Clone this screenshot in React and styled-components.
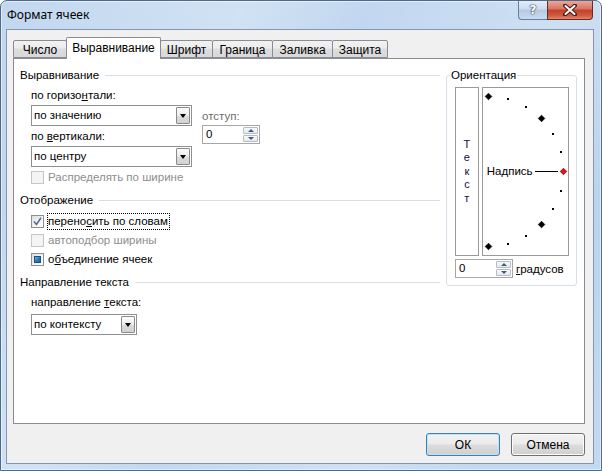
import React from "react";
import styled, { createGlobalStyle } from "styled-components";

const Global = createGlobalStyle`
  html, body { margin: 0; padding: 0; background: #fff; }
  body {
    font-family: "Liberation Sans", Arial, sans-serif;
    font-size: 11.5px;
    color: #000;
  }
  * { box-sizing: border-box; }
`;

const Window = styled.div`
  width: 602px;
  height: 471px;
  display: flex;
  flex-direction: column;
  border: 1px solid #4d6a8a;
  border-radius: 7px 7px 0 0;
  overflow: hidden;
  background:
    linear-gradient(115deg, rgba(255,255,255,0) 0%, rgba(255,255,255,.25) 30%, rgba(255,255,255,0) 45%, rgba(255,255,255,.2) 70%, rgba(255,255,255,0) 85%),
    linear-gradient(180deg, #c2d8f0 0%, #bbd3ed 40%, #c3d9f1 100%);
  box-shadow: inset 0 0 0 1px rgba(255,255,255,.55);
`;

const TitleBar = styled.div`
  height: 28px;
  flex-shrink: 0;
  display: flex;
  justify-content: space-between;
  align-items: flex-start;
  padding: 0 8px 0 6px;
`;

const Title = styled.div`
  margin-top: 6px;
  line-height: 15px;
  font-family: "Noto Sans", sans-serif;
  font-size: 12px;
  color: #000;
`;

const Caption = styled.div`
  display: flex;
`;

const HelpBtn = styled.div`
  width: 29px;
  height: 19px;
  border: 1px solid #6a7e98;
  border-top: none;
  border-right: none;
  border-radius: 0 0 0 4px;
  background: linear-gradient(180deg, #e3edf8 0%, #cddcee 45%, #b4c9e2 50%, #c9dbef 100%);
  display: flex;
  align-items: center;
  justify-content: center;
  font-family: "DejaVu Sans", sans-serif;
  font-weight: bold;
  font-size: 12px;
  color: #fff;
  text-shadow: 0 0 1px #3a4a60, 0 0 1px #3a4a60, 0 0 2px #3a4a60;
`;

const CloseBtn = styled.div`
  width: 46px;
  height: 19px;
  border: 1px solid #6b2a22;
  border-top: none;
  border-radius: 0 0 4px 0;
  background: linear-gradient(180deg, #e8a899 0%, #d9735f 45%, #c1412a 50%, #cf5a3f 80%, #e2876b 100%);
  display: flex;
  align-items: center;
  justify-content: center;
`;

const Client = styled.div`
  flex: 1;
  margin: 0 7px 6px 5px;
  background: #f0f0f0;
  border: 1px solid #8597ad;
  padding: 7px 8px 0 6px;
  display: flex;
  flex-direction: column;
`;

const Tabs = styled.div`
  display: flex;
  align-items: flex-end;
  height: 21px;
  position: relative;
  z-index: 1;
`;

const Tab = styled.div`
  width: ${(p) => p.$w}px;
  height: ${(p) => (p.$active ? 22 : 18)}px;
  margin-left: ${(p) => (p.$first ? 0 : -1)}px;
  margin-bottom: ${(p) => (p.$active ? -1 : 0)}px;
  padding-top: ${(p) => (p.$active ? 3 : 2)}px;
  border: 1px solid #898c95;
  border-bottom: ${(p) => (p.$active ? "none" : "1px solid #898c95")};
  border-radius: 2px 2px 0 0;
  background: ${(p) =>
    p.$active
      ? "#fff"
      : "linear-gradient(180deg, #f2f2f2 0%, #ebebeb 45%, #dddddd 50%, #d8d8d8 100%)"};
  position: relative;
  z-index: ${(p) => (p.$active ? 2 : 1)};
  text-align: center;
  line-height: 15px;
  font-size: 12px;
  white-space: nowrap;
`;

const Page = styled.div`
  width: 572px;
  height: 366px;
  background: #fff;
  border: 1px solid #898c95;
  display: flex;
  gap: 6px;
  padding: 9px 6px 0 6px;
`;

const LeftCol = styled.div`
  width: 420px;
  display: flex;
  flex-direction: column;
`;

const GroupHeader = styled.div`
  display: flex;
  align-items: center;
  height: 15px;
  line-height: 15px;
  margin-top: ${(p) => p.$mt || 0}px;
  white-space: nowrap;
  &::after {
    content: "";
    flex: 1;
    border-top: 1px solid #d5dfe5;
    margin-left: 6px;
  }
`;

const Indent = styled.div`
  margin-left: 11px;
  display: flex;
  flex-direction: column;
  align-items: flex-start;
`;

const FieldLabel = styled.div`
  line-height: 15px;
  margin-top: ${(p) => p.$mt || 0}px;
  color: ${(p) => (p.$disabled ? "#6d6d6d" : "#000")};
  white-space: nowrap;
`;

const AlignRow = styled.div`
  display: flex;
  margin-top: 2px;
`;

const SelectCol = styled.div`
  display: flex;
  flex-direction: column;
`;

const IndentCol = styled.div`
  display: flex;
  flex-direction: column;
  margin: 4px 0 0 10px;
`;

const Select = styled.div`
  width: ${(p) => p.$w}px;
  height: 21px;
  margin-top: ${(p) => p.$mt || 0}px;
  border: 1px solid #8e8f8f;
  background: #fff;
  display: flex;
  align-items: center;
  padding-left: 2px;
`;

const SelectValue = styled.span`
  flex: 1;
  line-height: 15px;
  white-space: nowrap;
`;

const DropBtn = styled.span`
  width: 14px;
  align-self: stretch;
  margin: 1px 1px 1px 0;
  border: 1px solid #8a8a8a;
  border-radius: 1px;
  background: linear-gradient(180deg, #fbfbfb 0%, #ececec 50%, #dcdcdc 51%, #d2d2d2 100%);
  display: flex;
  align-items: center;
  justify-content: center;
  &::after {
    content: "";
    border-left: 3.5px solid transparent;
    border-right: 3.5px solid transparent;
    border-top: 4px solid #000;
  }
`;

const Spinner = styled.div`
  width: 58px;
  height: 19px;
  margin-top: ${(p) => p.$mt || 0}px;
  border: 1px solid #a7a7a7;
  background: #fff;
  display: flex;
  align-items: center;
  padding-left: 3px;
`;

const SpinValue = styled.span`
  flex: 1;
  line-height: 15px;
`;

const SpinBtns = styled.span`
  width: 15px;
  align-self: stretch;
  margin: 1px;
  display: flex;
  flex-direction: column;
  gap: 1px;
`;

const SpinBtn = styled.span`
  flex: 1;
  border: 1px solid #b6bcc6;
  border-radius: 1px;
  background: linear-gradient(180deg, #f8f9fb 0%, #e6e9ee 100%);
  display: flex;
  align-items: center;
  justify-content: center;
  &::after {
    content: "";
    border-left: 3px solid transparent;
    border-right: 3px solid transparent;
    ${(p) => (p.$up ? "border-bottom: 3px solid #3a5a8c;" : "border-top: 3px solid #3a5a8c;")}
  }
`;

const CheckRow = styled.div`
  display: flex;
  align-items: center;
  gap: ${(p) => (p.$focus ? 3 : 4)}px;
  margin-top: ${(p) => p.$mt || 0}px;
  color: ${(p) => (p.$disabled ? "#8d8d8d" : "#000")};
  line-height: 15px;
  white-space: nowrap;
`;

const Box = styled.span`
  width: 13px;
  height: 13px;
  flex-shrink: 0;
  border: 1px solid ${(p) => (p.$disabled ? "#c6c6c6" : "#8e8f8f")};
  background: ${(p) =>
    p.$disabled ? "#f4f4f4" : "linear-gradient(135deg, #dcdcdc 0%, #f6f6f6 60%, #ffffff 100%)"};
  display: flex;
  align-items: center;
  justify-content: center;
`;

const Mixed = styled.span`
  width: 7px;
  height: 7px;
  border: 1px solid #1d4f7c;
  background: linear-gradient(135deg, #6fb2e0 0%, #2f7ab5 55%, #1c5d93 100%);
`;

const FocusText = styled.span`
  border: 1px dotted #000;
  padding: 0 1px 0 0;
`;

const Fieldset = styled.fieldset`
  margin: 0;
  width: 131px;
  height: 218px;
  border: 1px solid #d5dfe5;
  border-radius: 3px;
  padding: 4px 7px 0 8px;
  min-inline-size: 0;
`;

const Legend = styled.legend`
  padding: 0 1px;
  margin-left: -5px;
  line-height: 15px;
`;

const OrientRow = styled.div`
  display: flex;
  gap: 3px;
`;

const VertBox = styled.div`
  width: 24px;
  height: 169px;
  border: 1px solid #9a9a9a;
  display: flex;
  flex-direction: column;
  align-items: center;
  justify-content: center;
  color: #101040;
`;

const VertLetter = styled.span`
  line-height: 13.5px;
  font-size: 11px;
`;

const DialBox = styled.div`
  width: 88px;
  height: 169px;
  border: 1px solid #9a9a9a;
  position: relative;
  display: flex;
  align-items: center;
  padding-left: 4px;
`;

const DialSvg = styled.svg`
  position: absolute;
  left: 0;
  top: 0;
`;

const DialText = styled.span`
  line-height: 15px;
  position: relative;
`;

const DegreeRow = styled.div`
  display: flex;
  align-items: center;
  gap: 3px;
  margin-top: 3px;
`;

const Footer = styled.div`
  display: flex;
  justify-content: flex-end;
  gap: 11px;
  margin-top: 9px;
`;

const Button = styled.button`
  width: 74px;
  height: 23px;
  padding: 0;
  font: inherit;
  font-size: 12px;
  color: #000;
  border: 1px solid ${(p) => (p.$default ? "#3c7fb1" : "#707070")};
  border-radius: 3px;
  background: linear-gradient(180deg, #f2f2f2 0%, #ebebeb 48%, #dddddd 52%, #cfcfcf 100%);
  box-shadow: inset 0 0 0 1px ${(p) => (p.$default ? "#bfe3f8" : "#fcfcfc")};
`;

const angles = [90, 75, 60, 45, 30, 15, 0, -15, -30, -45, -60, -75, -90];

function Dial() {
  const cx = 5.5;
  const cy = 83.5;
  const r = 75;
  return (
    <DialSvg width="86" height="167" viewBox="0 0 86 167">
      <line x1="52" y1="83.5" x2="75" y2="83.5" stroke="#000" strokeWidth="1" />
      {angles.map((a) => {
        const rad = (a * Math.PI) / 180;
        const x = cx + r * Math.cos(rad);
        const y = cy - r * Math.sin(rad);
        if (a % 45 === 0) {
          const s = 3.3;
          return (
            <polygon
              key={a}
              points={`${x},${y - s} ${x + s},${y} ${x},${y + s} ${x - s},${y}`}
              fill={a === 0 ? "#e8101a" : "#000"}
              stroke={a === 0 ? "#5a0a0a" : "#000"}
              strokeWidth="0.7"
            />
          );
        }
        return <rect key={a} x={Math.round(x) - 1} y={Math.round(y) - 1} width="2" height="2" fill="#000" />;
      })}
    </DialSvg>
  );
}

export default function App() {
  return (
    <>
      <Global />
      <Window>
        <TitleBar>
          <Title>Формат ячеек</Title>
          <Caption>
            <HelpBtn>?</HelpBtn>
            <CloseBtn>
              <svg width="14" height="12" viewBox="0 0 14 12">
                <path d="M2 1.5 L12 10.5 M12 1.5 L2 10.5" stroke="#4a1a14" strokeWidth="4" strokeLinecap="round" />
                <path d="M2.5 2 L11.5 10 M11.5 2 L2.5 10" stroke="#fff" strokeWidth="2" strokeLinecap="round" />
              </svg>
            </CloseBtn>
          </Caption>
        </TitleBar>
        <Client>
          <Tabs>
            <Tab $w={54} $first>Число</Tab>
            <Tab $w={95} $active>Выравнивание</Tab>
            <Tab $w={53}>Шрифт</Tab>
            <Tab $w={61}>Граница</Tab>
            <Tab $w={61}>Заливка</Tab>
            <Tab $w={56}>Защита</Tab>
          </Tabs>
          <Page>
            <LeftCol>
              <GroupHeader>Выравнивание</GroupHeader>
              <Indent>
                <FieldLabel $mt={5}>
                  по горизо<u>н</u>тали:
                </FieldLabel>
                <AlignRow>
                  <SelectCol>
                    <Select $w={161}>
                      <SelectValue>по значению</SelectValue>
                      <DropBtn />
                    </Select>
                    <FieldLabel $mt={3}>
                      по <u>в</u>ертикали:
                    </FieldLabel>
                    <Select $w={161} $mt={2}>
                      <SelectValue>по центру</SelectValue>
                      <DropBtn />
                    </Select>
                  </SelectCol>
                  <IndentCol>
                    <FieldLabel $disabled>отступ:</FieldLabel>
                    <Spinner $mt={1}>
                      <SpinValue>0</SpinValue>
                      <SpinBtns>
                        <SpinBtn $up />
                        <SpinBtn />
                      </SpinBtns>
                    </Spinner>
                  </IndentCol>
                </AlignRow>
                <CheckRow $mt={3} $disabled>
                  <Box $disabled />
                  Распределять по ширине
                </CheckRow>
              </Indent>

              <GroupHeader $mt={8}>Отображение</GroupHeader>
              <Indent>
                <CheckRow $mt={5} $focus>
                  <Box>
                    <svg width="9" height="9" viewBox="0 0 9 9">
                      <path d="M1 4.5 L3.5 7.5 L8 0.8" fill="none" stroke="#56708f" strokeWidth="1.6" />
                    </svg>
                  </Box>
                  <FocusText>
                    перено<u>с</u>ить по словам
                  </FocusText>
                </CheckRow>
                <CheckRow $mt={3} $disabled>
                  <Box $disabled />
                  автоподбор ширины
                </CheckRow>
                <CheckRow $mt={4}>
                  <Box>
                    <Mixed />
                  </Box>
                  <span>
                    о<u>б</u>ъединение ячеек
                  </span>
                </CheckRow>
              </Indent>

              <GroupHeader $mt={8}>Направление текста</GroupHeader>
              <Indent>
                <FieldLabel $mt={5}>
                  направление <u>т</u>екста:
                </FieldLabel>
                <Select $w={106} $mt={4}>
                  <SelectValue>по контексту</SelectValue>
                  <DropBtn />
                </Select>
              </Indent>
            </LeftCol>

            <Fieldset>
              <Legend>Ориентация</Legend>
              <OrientRow>
                <VertBox>
                  {"Текст".split("").map((ch, i) => (
                    <VertLetter key={i}>{ch}</VertLetter>
                  ))}
                </VertBox>
                <DialBox>
                  <Dial />
                  <DialText>Надпись</DialText>
                </DialBox>
              </OrientRow>
              <DegreeRow>
                <Spinner>
                  <SpinValue>0</SpinValue>
                  <SpinBtns>
                    <SpinBtn $up />
                    <SpinBtn />
                  </SpinBtns>
                </Spinner>
                <span>
                  <u>г</u>радусов
                </span>
              </DegreeRow>
            </Fieldset>
          </Page>
          <Footer>
            <Button $default>ОК</Button>
            <Button>Отмена</Button>
          </Footer>
        </Client>
      </Window>
    </>
  );
}
